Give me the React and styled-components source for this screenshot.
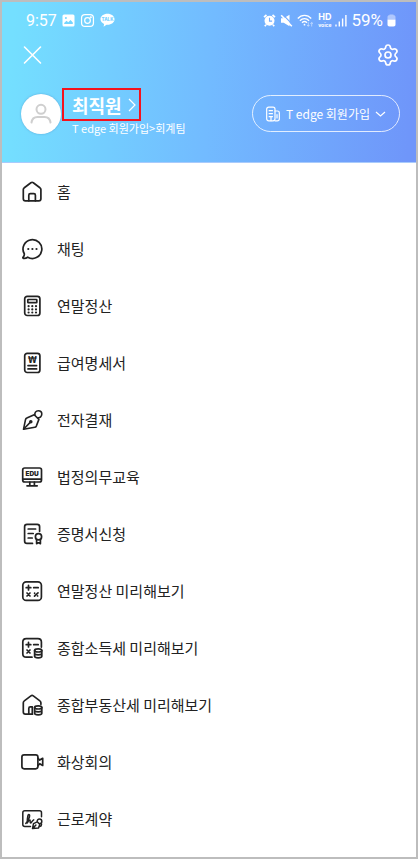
import React from 'react';
import styled, { createGlobalStyle } from 'styled-components';
import { Settings } from 'lucide-react';

const GlobalStyle = createGlobalStyle`
  * {
    box-sizing: border-box;
  }
  body {
    margin: 0;
    background: white;
    color: #222;
    font-family: 'Noto Sans CJK KR', 'Noto Sans', sans-serif;
  }
  button {
    margin: 0;
    padding: 0;
    border: 0;
    background: none;
    color: inherit;
    font: inherit;
    cursor: pointer;
  }
  a {
    color: inherit;
    text-decoration: none;
  }
  svg {
    display: block;
    flex: none;
  }
`;

const Screen = styled.div`
  min-height: 100vh;
  border: 2px solid #bdbdbd;
`;

const Header = styled.header`
  padding: 0 16px 23px 18px;
  border-bottom: 1px solid #a9cbfc;
  background: linear-gradient(94deg, #74dfff 3%, #72bbff 50%, #6f96fa 98%);
  color: white;
`;

const StatusBar = styled.div`
  display: flex;
  align-items: center;
  justify-content: space-between;
  height: 36px;
  padding: 0 4px 0 6px;
  font-family: Roboto, sans-serif;
  font-size: 16px;
`;

const StatusGroup = styled.div`
  display: flex;
  align-items: center;
  gap: ${props => props.$gap}px;
`;

const BatteryLevel = styled.span`
  font-size: 17px;
`;

const VoiceBadge = styled.span`
  display: flex;
  flex-direction: column;
  align-items: center;
  font-family: Inter, sans-serif;
  font-size: 9px;
  font-weight: 700;
  line-height: 10px;

  small {
    font-size: 5px;
    line-height: 6px;
  }
`;

const Toolbar = styled.div`
  display: flex;
  align-items: center;
  justify-content: space-between;
  height: 34px;
`;

const Profile = styled.div`
  display: flex;
  align-items: center;
  margin-top: 16px;
`;

const Avatar = styled.div`
  display: flex;
  align-items: center;
  justify-content: center;
  width: 40px;
  height: 40px;
  margin: 0 1px;
  border-radius: 50%;
  background: white;
  box-shadow: 0 0 2px rgba(60, 110, 170, 0.5);
  color: #cfcfcf;
`;

const Identity = styled.div`
  flex: 1;
  padding-bottom: 4px;
`;

const NameButton = styled.button`
  display: flex;
  align-items: center;
  gap: 5px;
  height: 33px;
  padding: 0 2px 0 8px;
  border: 2px solid #f5121d;
  font-size: 18px;
  font-weight: 700;
  line-height: 28px;
`;

const Team = styled.div`
  padding-left: 10px;
  font-size: 11px;
  line-height: 14px;
  white-space: nowrap;
`;

const CompanyButton = styled.button`
  display: flex;
  align-items: center;
  gap: 5px;
  height: 37px;
  padding: 0 13px 0 12px;
  border: 1px solid rgba(255, 255, 255, 0.8);
  border-radius: 19px;
  font-size: 12px;
  white-space: nowrap;
`;

const Menu = styled.ul`
  margin: 0;
  padding: 0 0 9px;
  list-style: none;
`;

const MenuLink = styled.a`
  display: flex;
  align-items: center;
  gap: 13px;
  height: 57px;
  padding: 0 18px;
  font-size: 15px;
`;

const Icon = ({ size = 24, width = 1.7, children }) => (
  <svg
    width={size}
    height={size}
    viewBox="0 0 24 24"
    fill="none"
    stroke="currentColor"
    strokeWidth={width}
    strokeLinecap="round"
    strokeLinejoin="round"
    aria-hidden="true"
  >
    {children}
  </svg>
);

const Coins = () => (
  <>
    <ellipse cx="18.2" cy="14.4" rx="3.6" ry="1.6" />
    <path d="M14.6 14.4v5.8c0 .9 1.6 1.6 3.6 1.6s3.6-.7 3.6-1.6v-5.8M14.6 17.3c0 .9 1.6 1.6 3.6 1.6s3.6-.7 3.6-1.6" />
  </>
);

const HomeIcon = () => (
  <Icon>
    <path d="M3.3 9.6c0-.8.3-1.4 1-1.9l6.6-5c.8-.6 1.6-.6 2.4 0l6.6 5c.7.5 1 1.1 1 1.9v9.2c0 1.3-.8 2.1-2.1 2.1H5.4c-1.3 0-2.1-.8-2.1-2.1z" />
    <path d="M8.8 20.8v-5.6c0-1 .5-1.5 1.5-1.5h3.6c1 0 1.5.5 1.5 1.5v5.6" />
  </Icon>
);

const ChatIcon = () => (
  <Icon>
    <path d="M4.3 16.8a9.4 9.4 0 1 1 3.4 3.4c-1.3.9-2.8 1.3-4.3 1.1-.6-.1-.7-.7-.3-1.1.9-1 1.3-2.1 1.2-3.4z" />
    <g fill="currentColor" stroke="none">
      <circle cx="8.3" cy="12" r="1.1" />
      <circle cx="12.4" cy="12" r="1.1" />
      <circle cx="16.5" cy="12" r="1.1" />
    </g>
  </Icon>
);

const CalculatorIcon = () => (
  <Icon>
    <rect x="4.7" y="2.3" width="15.2" height="19.2" rx="2.5" />
    <rect x="7.8" y="5.5" width="9" height="3.2" rx="0.5" />
    <g fill="currentColor" stroke="none">
      {[12.2, 15.4, 18.5].map(y =>
        [8.6, 12.3, 16].map(x => (
          <circle key={`${x}-${y}`} cx={x} cy={y} r="1.1" />
        ))
      )}
    </g>
  </Icon>
);

const PayslipIcon = () => (
  <Icon>
    <rect x="4.7" y="2.3" width="15.2" height="19.2" rx="2.5" />
    <text
      x="12.3"
      y="11.5"
      fill="currentColor"
      stroke="none"
      textAnchor="middle"
      fontFamily="DejaVu Sans, sans-serif"
      fontSize="8"
      fontWeight="700"
    >
      ₩
    </text>
    <path d="M8 14.6h8.6M8 17.9h8.6" />
  </Icon>
);

const PenIcon = () => (
  <Icon width={1.6}>
    <path d="M3.5 21.3l2-9.6c.2-.8.6-1.3 1.3-1.6l7.4-3.4 4.7 4.7-2.6 6.7c-.3.7-.8 1.1-1.5 1.2z" />
    <path d="M4 20.8l6.2-6.4" />
    <path d="M15 7.3c-.7-2.3.8-4.6 3.3-4.6 2 0 3.5 1.5 3.5 3.4 0 2.3-1.9 3.9-3.7 3.6" />
    <circle cx="10.8" cy="13.7" r="1" fill="currentColor" />
  </Icon>
);

const EducationIcon = () => (
  <Icon>
    <rect x="2.7" y="3" width="18.8" height="14" rx="2" />
    <path d="M3 14.2h18.2M9.8 17.2v3M14.4 17.2v3M7 20.8h10.2" />
    <text
      x="12.1"
      y="11.4"
      fill="currentColor"
      stroke="none"
      textAnchor="middle"
      fontFamily="Inter, sans-serif"
      fontSize="6.5"
      fontWeight="900"
    >
      EDU
    </text>
  </Icon>
);

const CertificateIcon = () => (
  <Icon>
    <path d="M12.5 21.4H7c-1.5 0-2.4-.9-2.4-2.4V4.8c0-1.5.9-2.4 2.4-2.4h10.2c1.5 0 2.4.9 2.4 2.4v4.5M8.2 7h7.4M8.2 11.5h5M8.2 16h4" />
    <circle cx="18.5" cy="14.7" r="3.1" />
    <path d="M16.6 17.3v4.3l1.9-.8 1.9.8v-4.3" />
  </Icon>
);

const PreviewIcon = () => (
  <Icon>
    <rect x="2.8" y="2.8" width="18.6" height="18.6" rx="3.5" />
    <path d="M6.2 8.7h4.6M8.5 6.4V11M13.7 8.7h4.5M7 14l3 3M10 14l-3 3M14.5 17.1l3.5-3.3M14.6 14.2v.1M17.6 16.9v.1" />
  </Icon>
);

const IncomeTaxIcon = () => (
  <Icon>
    <path d="M12 21.2H6.3c-2.3 0-3.5-1.2-3.5-3.5V6.1c0-2.3 1.2-3.5 3.5-3.5h11.6c2.3 0 3.5 1.2 3.5 3.5v5M6.2 8.7h4.6M8.5 6.4V11M13.7 8.7h4.5M7 14l3 3M10 14l-3 3" />
    <Coins />
  </Icon>
);

const PropertyTaxIcon = () => (
  <Icon>
    <path d="M12.5 21.2H5.4c-1.3 0-2.1-.8-2.1-2.1V9.8c0-.8.3-1.4 1-1.9l6.6-5c.8-.6 1.6-.6 2.4 0l6.6 5c.7.5 1 1.1 1 1.9v1.4M8.8 21v-5.6c0-1 .5-1.5 1.5-1.5h2M12.3 14v7" />
    <Coins />
  </Icon>
);

const MeetingIcon = () => (
  <Icon>
    <rect x="1.9" y="4.8" width="16" height="14" rx="2.2" />
    <path d="M18 8.2l1.7 1.9 3-1.8v7.2l-3-1.8-1.7 1.9" />
  </Icon>
);

const ContractIcon = () => (
  <Icon width={1.5}>
    <path d="M10.5 19.4H4.8c-1.3 0-2-.7-2-2V5.7c0-1.3.7-2 2-2h14.7c1.3 0 2 .7 2 2v4M21.5 17v.5c0 1.1-.6 1.8-1.7 1.9" />
    <path d="M5.8 16.4c2.2-2.6 3.9-5.8 3.8-8-.1-1.3-1.4-1.2-1.7.2-.6 2.5-.8 4.6-.6 7.4.8-1.7 1.9-3.2 2.6-3.1.8.1-.4 2.9.7 3.1.8.1 1.2-2.2 3.1-3.1" />
    <path d="M12.5 21.6l1-5 3.7-1.8 2.7 2.6-1.5 3.7zM17.2 14.6c-.2-1.6.9-2.7 2.3-2.7s2.3 1 2.3 2.3c0 1.5-1 2.5-2.2 2.5M12.9 21.2l3-3.1" />
  </Icon>
);

const CloseIcon = () => (
  <Icon width={1.6}>
    <path d="M4.5 4l16 16M20.5 4l-16 16" />
  </Icon>
);

const PersonIcon = () => (
  <Icon width={2}>
    <circle cx="12" cy="7.3" r="4.5" />
    <path d="M2.5 20.5c.5-3.9 2.6-5.6 6-5.6h7c3.4 0 5.5 1.7 6 5.6" />
  </Icon>
);

const BuildingIcon = () => (
  <Icon size={16} width={1.8}>
    <rect x="2.5" y="1.8" width="12.5" height="20.4" rx="3" />
    <path d="M15 7.5h3.7c1.7 0 2.8.8 2.8 2.8v8.7c0 2-1 3.2-3.2 3.2H15M6.2 7h5M6.2 11.5h5M6.2 16h5M9 16v6M18 13v5" />
  </Icon>
);

const PictureIcon = () => (
  <svg width="13" height="13" viewBox="0 0 13 13" aria-hidden="true">
    <path
      fill="currentColor"
      fillRule="evenodd"
      d="M2 .5h9A1.5 1.5 0 0 1 12.5 2v9a1.5 1.5 0 0 1-1.5 1.5H2A1.5 1.5 0 0 1 .5 11V2A1.5 1.5 0 0 1 2 .5zM2.2 10h8.6V8.4L8.5 6 6.3 8.2 4.5 6.8 2.2 8.9zM3.9 3a1 1 0 1 0 0 2 1 1 0 0 0 0-2z"
    />
  </svg>
);

const InstagramIcon = () => (
  <Icon size={15} width={2}>
    <rect x="2.5" y="2.5" width="19" height="19" rx="5.5" />
    <circle cx="12" cy="12" r="4.5" />
    <circle cx="17.3" cy="6.7" r="0.7" />
  </Icon>
);

const TalkIcon = () => (
  <svg width="15" height="14" viewBox="0 0 15 14" aria-hidden="true">
    <path
      fill="currentColor"
      d="M7.5.8c4 0 7 2.4 7 5.5s-3 5.5-7 5.5l-1-.1-2.9 2.1.5-2.8C2 10 .5 8.3.5 6.3.5 3.2 3.5.8 7.5.8z"
    />
    <text
      x="7.5"
      y="7.9"
      fill="#78cfff"
      textAnchor="middle"
      fontFamily="Inter, sans-serif"
      fontSize="4.5"
      fontWeight="800"
    >
      TALK
    </text>
  </svg>
);

const AlarmIcon = () => (
  <svg width="13" height="13" viewBox="0 0 13 13" aria-hidden="true">
    <circle cx="6.5" cy="6.8" r="5" fill="currentColor" />
    <path
      d="M1 3.2L3.5 1M12 3.2L9.5 1M3 10.8l-1.2 1.4M10 10.8l1.2 1.4"
      stroke="currentColor"
      strokeWidth="1.7"
    />
    <path d="M6.5 3.8v3.3h2.6" fill="none" stroke="#73adff" strokeWidth="1.1" />
  </svg>
);

const MuteIcon = () => (
  <svg width="13" height="13" viewBox="0 0 13 13" aria-hidden="true">
    <path d="M1 4.3h2.7L9.5.8v11.4L3.7 8.7H1z" fill="currentColor" />
    <path d="M2.5.2l10.5 11" stroke="#73abff" strokeWidth="1.2" />
    <path d="M1.2 1.2l10.6 11" stroke="currentColor" strokeWidth="1.6" />
  </svg>
);

const WifiIcon = () => (
  <svg
    width="17"
    height="13"
    viewBox="0 0 17 13"
    fill="none"
    stroke="currentColor"
    strokeWidth="1.3"
    aria-hidden="true"
  >
    <path d="M.8 4.5C4.5.3 10.5.3 14.2 4.5M2.9 6.7c2.7-2.9 6.5-2.9 9.2 0M5 8.8c1.5-1.5 3.5-1.5 5 0" />
    <circle cx="7.5" cy="10.7" r="0.9" fill="currentColor" stroke="none" />
    <path d="M11.3 8.3v4M10 11l1.3 1.3 1.2-1.3M14.7 12.5v-4M13.4 9.8l1.3-1.3L16 9.8" strokeWidth="0.8" opacity="0.6" />
  </svg>
);

const SignalIcon = () => (
  <svg width="12" height="13" viewBox="0 0 12 13" aria-hidden="true">
    <path d="M1 10.5v2M4.3 7.5v5M7.6 4.5v8M10.9 1v11.5" stroke="currentColor" strokeWidth="1.4" />
  </svg>
);

const BatteryIcon = () => (
  <svg width="9" height="13" viewBox="0 0 9 13" aria-hidden="true">
    <path d="M2.5 1.2V.5h4v.7c1.4 0 2 .6 2 2v2.3h-8V3.2c0-1.4.6-2 2-2z" fill="currentColor" opacity="0.45" />
    <path d="M.5 5.5h8v5c0 1.3-.7 2-2 2h-4c-1.3 0-2-.7-2-2z" fill="currentColor" />
  </svg>
);

const menu = [
  { label: '홈', icon: HomeIcon },
  { label: '채팅', icon: ChatIcon },
  { label: '연말정산', icon: CalculatorIcon },
  { label: '급여명세서', icon: PayslipIcon },
  { label: '전자결재', icon: PenIcon },
  { label: '법정의무교육', icon: EducationIcon },
  { label: '증명서신청', icon: CertificateIcon },
  { label: '연말정산 미리해보기', icon: PreviewIcon },
  { label: '종합소득세 미리해보기', icon: IncomeTaxIcon },
  { label: '종합부동산세 미리해보기', icon: PropertyTaxIcon },
  { label: '화상회의', icon: MeetingIcon },
  { label: '근로계약', icon: ContractIcon },
];

export default function App() {
  return (
    <Screen>
      <GlobalStyle />
      <Header>
        <StatusBar>
          <StatusGroup $gap={5}>
            <span>9:57</span>
            <PictureIcon />
            <InstagramIcon />
            <TalkIcon />
          </StatusGroup>
          <StatusGroup $gap={4}>
            <AlarmIcon />
            <MuteIcon />
            <WifiIcon />
            <VoiceBadge>
              HD
              <small>voice</small>
            </VoiceBadge>
            <SignalIcon />
            <BatteryLevel>59%</BatteryLevel>
            <BatteryIcon />
          </StatusGroup>
        </StatusBar>

        <Toolbar>
          <button type="button" aria-label="닫기">
            <CloseIcon />
          </button>
          <button type="button" aria-label="설정">
            <Settings size={24} strokeWidth={1.7} />
          </button>
        </Toolbar>

        <Profile>
          <Avatar>
            <PersonIcon />
          </Avatar>
          <Identity>
            <NameButton type="button">
              최직원
              <svg width="10" height="16" viewBox="0 0 10 16" fill="none" stroke="currentColor" strokeWidth="1.2">
                <path d="M2 2l6 6-6 6" />
              </svg>
            </NameButton>
            <Team>T edge 회원가입&gt;회계팀</Team>
          </Identity>
          <CompanyButton type="button">
            <BuildingIcon />
            T edge 회원가입
            <svg width="11" height="8" viewBox="0 0 11 8" fill="none" stroke="currentColor" strokeWidth="1.2">
              <path d="M1 2l4.5 4L10 2" />
            </svg>
          </CompanyButton>
        </Profile>
      </Header>

      <nav>
        <Menu>
          {menu.map(({ label, icon: ItemIcon }) => (
            <li key={label}>
              <MenuLink href="#">
                <ItemIcon />
                {label}
              </MenuLink>
            </li>
          ))}
        </Menu>
      </nav>
    </Screen>
  );
}
